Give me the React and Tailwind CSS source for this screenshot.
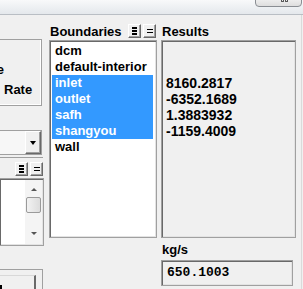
const sunken =
  'border border-[#a0a0a0] shadow-[inset_1px_1px_0_#696969,inset_-1px_-1px_0_#e3e3e3]'
const raised =
  'border border-t-white border-l-white border-r-[#696969] border-b-[#696969] bg-[#f0f0f0] shadow-[inset_-1px_-1px_0_#a0a0a0]'

function ListIconBtn() {
  return (
    <div className={`${raised} w-[13px] h-[14px] flex flex-col items-center justify-center gap-[1px]`}>
      <div className="w-[5px] h-[2px] bg-black" />
      <div className="w-[5px] h-[2px] bg-black" />
      <div className="w-[5px] h-[2px] bg-black" />
    </div>
  )
}

function EqualBtn() {
  return (
    <div className={`${raised} w-[13px] h-[14px] flex flex-col items-center justify-center gap-[2px]`}>
      <div className="w-[6px] h-[1px] bg-black" />
      <div className="w-[6px] h-[1px] bg-black" />
    </div>
  )
}

const boundaries = [
  { name: 'dcm', on: false },
  { name: 'default-interior', on: false },
  { name: 'inlet', on: true },
  { name: 'outlet', on: true },
  { name: 'safh', on: true },
  { name: 'shangyou', on: true },
  { name: 'wall', on: false },
]

const results = ['', '', '8160.2817', '-6352.1689', '1.3883932', '-1159.4009']

function LeftColumn() {
  return (
    <div className="w-[44px] flex flex-col shrink-0">
      {/* options frame, mostly off-screen */}
      <div className="mt-[24px] h-[67px] w-[42px] border-t border-r border-b border-[#a0a0a0] shadow-[inset_-1px_-1px_0_#fff] flex flex-col">
        <div className="mt-[22px] -ml-[120px] w-[124px] text-right whitespace-nowrap">Mass Flow Rate</div>
        <div className="mt-[4px] pl-[4px]">Rate</div>
      </div>

      {/* combo */}
      <div className="mt-[24px] h-[25px] w-[42px] border-t border-r border-b border-[#a0a0a0] bg-[#f7f7f7] flex justify-end">
        <div className={`${raised} w-[16px] h-full flex items-center justify-center`}>
          <div className="w-0 h-0 border-l-[3px] border-r-[3px] border-t-[4px] border-l-transparent border-r-transparent border-t-black" />
        </div>
      </div>

      <div className="mt-[2px] h-[1px] w-[43px] bg-[#a0a0a0]" />

      <div className="mt-[4px] flex justify-end gap-[2px] pr-[1px]">
        <ListIconBtn />
        <EqualBtn />
      </div>

      {/* list with scrollbar */}
      <div className={`${sunken} border-l-0 mt-[2px] h-[68px] w-[44px] bg-white flex justify-end p-[1px]`}>
        <div className="w-[17px] h-full bg-[#f4f4f4] flex flex-col items-center">
          <div className="mt-[8px] w-0 h-0 border-l-[3px] border-r-[3px] border-b-[3px] border-l-transparent border-r-transparent border-b-[#555]" />
          <div className="mt-[6px] w-[15px] h-[16px] border border-[#9a9a9a] rounded-[2px] bg-gradient-to-r from-[#f2f2f2] to-[#dcdcdc]" />
          <div className="mt-[19px] w-0 h-0 border-l-[3px] border-r-[3px] border-t-[3px] border-l-transparent border-r-transparent border-t-[#555]" />
        </div>
      </div>

      {/* bottom frame with button */}
      <div className="mt-[23px] h-[21px] w-[43px] border-t border-r border-[#a0a0a0] pt-[5px] pr-[6px]">
        <div className="h-full border-t border-[#d8d8d8] border-r-2 border-r-[#696969] bg-[#f0f0f0] flex items-end">
          <div className="mb-[1px] w-[2px] h-[4px] bg-black" />
        </div>
      </div>
    </div>
  )
}

function BoundariesColumn() {
  return (
    <div className="ml-[5px] w-[108px] flex flex-col shrink-0">
      <div className="mt-[9px] h-[16px] flex items-start">
        <span className="pl-[1px]">Boundaries</span>
        <div className="ml-auto flex gap-[2px] pr-[1px]">
          <ListIconBtn />
          <EqualBtn />
        </div>
      </div>
      <div className={`${sunken} h-[198px] bg-white pt-[2px] pl-[2px] pr-[3px]`}>
        {boundaries.map((b) => (
          <div
            key={b.name}
            className={`h-[16px] pl-[3px] whitespace-nowrap ${b.on ? 'bg-[#3399ff] text-white' : ''}`}
          >
            {b.name}
          </div>
        ))}
      </div>
    </div>
  )
}

function ResultsColumn() {
  return (
    <div className="ml-[4px] w-[135px] flex flex-col shrink-0">
      <div className="mt-[9px] h-[16px] pl-[1px]">Results</div>
      <div className={`${sunken} h-[198px] bg-[#f0f0f0] pt-[2px] pl-[4px]`}>
        {results.map((r, i) => (
          <div key={i} className="h-[16px] text-[14px] leading-[16px]">
            {r}
          </div>
        ))}
      </div>
      <div className="mt-[4px] h-[16px] pl-[1px]">kg/s</div>
      <div
        className={`${sunken} mt-[2px] h-[26px] w-[132px] bg-[#f0f0f0] flex items-center pl-[5px] font-['Liberation_Mono',monospace] text-[13px]`}
      >
        650.1003
      </div>
    </div>
  )
}

export default function App() {
  return (
    <div className="w-[303px] h-[289px] overflow-hidden bg-[#f0f0f0] flex flex-col font-['Liberation_Sans',Arial,sans-serif] font-bold text-[13px] leading-[16px] text-black">
      <div className="h-[15px] shrink-0 border-b border-[#b9bec4] bg-gradient-to-b from-[#f8f9fa] to-[#e4e8ec] flex justify-end pr-[1px]">
        <div className="-mt-[4px] h-[11px] w-[47px] rounded-b-[4px] border border-[#8a8e93] bg-gradient-to-b from-[#f4f4f4] to-[#dedede] flex justify-end pr-[13px] pt-[3px] gap-[1px]">
          <div className="w-[3px] h-[2px] border border-t-0 border-[#555] rounded-b-[1px]" />
          <div className="w-[3px] h-[2px] border border-t-0 border-[#555] rounded-b-[1px]" />
        </div>
      </div>
      <div className="flex flex-1">
        <LeftColumn />
        <BoundariesColumn />
        <ResultsColumn />
        <div className="ml-auto mr-[1px] w-[1px] bg-[#dadada]" />
      </div>
    </div>
  )
}
